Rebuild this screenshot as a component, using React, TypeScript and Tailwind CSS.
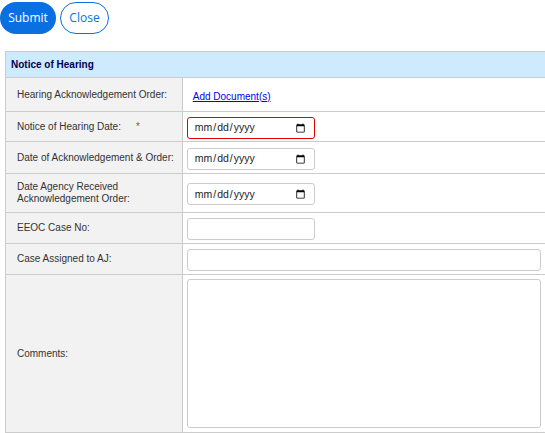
import React from "react";

const labelCls =
  "w-[177px] whitespace-nowrap border border-[#cccccc] bg-[#f2f2f2] pl-[11px] pr-2 align-middle text-[10px] leading-[12px] text-[#333333]";
const valueCls = "border border-[#cccccc] bg-white pl-[4px] pr-[4px] align-middle";
const inputCls =
  "h-[22px] rounded-[3px] border border-[#cccccc] bg-white px-[6px] text-[10.5px] text-[#222] outline-none";

export default function App() {
  return (
    <div className="h-[433px] w-[545px] overflow-hidden bg-white font-['Liberation_Sans',Arial,sans-serif]">
      <div className="flex items-center gap-[4px] pt-[2px]">
        <button
          type="button"
          className="h-[32px] w-[56px] rounded-full bg-[#0a6fe0] font-['Open_Sans',sans-serif] text-[12px] text-white"
        >
          Submit
        </button>
        <button
          type="button"
          className="h-[32px] w-[49px] rounded-full border border-[#0a6fe0] bg-white font-['Open_Sans',sans-serif] text-[12px] text-[#0a6fe0]"
        >
          Close
        </button>
      </div>

      <table className="ml-[5px] mt-[17px] w-[540px] border-collapse border border-[#cccccc]">
        <tbody>
          <tr className="h-[26px]">
            <td
              colSpan={2}
              className="border border-[#cccccc] bg-[#cdebfd] pl-[5px] text-[10px] font-bold text-[#000055]"
            >
              Notice of Hearing
            </td>
          </tr>
          <tr className="h-[34px]">
            <td className={labelCls}>Hearing Acknowledgement Order:</td>
            <td className={valueCls + " pl-[10px]"}>
              <a href="#" className="text-[10px] text-[#0000ee] underline">
                Add Document(s)
              </a>
            </td>
          </tr>
          <tr className="h-[30px]">
            <td className={labelCls}>
              <span className="inline-block w-[119px]">Notice of Hearing Date:</span>
              <span className="text-[#e03030]">*</span>
            </td>
            <td className={valueCls}>
              <input type="date" className={inputCls + " w-[128px] border-[#e00000]"} />
            </td>
          </tr>
          <tr className="h-[32px]">
            <td className={labelCls}>Date of Acknowledgement &amp; Order:</td>
            <td className={valueCls}>
              <input type="date" className={inputCls + " w-[128px]"} />
            </td>
          </tr>
          <tr className="h-[39px]">
            <td className={labelCls}>
              Date Agency Received
              <br />
              Acknowledgement Order:
            </td>
            <td className={valueCls}>
              <input type="date" className={inputCls + " w-[128px]"} />
            </td>
          </tr>
          <tr className="h-[31px]">
            <td className={labelCls}>EEOC Case No:</td>
            <td className={valueCls}>
              <input type="text" className={inputCls + " w-[128px]"} />
            </td>
          </tr>
          <tr className="h-[31px]">
            <td className={labelCls}>Case Assigned to AJ:</td>
            <td className={valueCls}>
              <input type="text" className={inputCls + " w-[354px]"} />
            </td>
          </tr>
          <tr className="h-[158px]">
            <td className={labelCls}>Comments:</td>
            <td className={valueCls}>
              <textarea className="block h-[149px] w-[354px] resize-none rounded-[3px] border border-[#cccccc] bg-white outline-none" />
            </td>
          </tr>
        </tbody>
      </table>
    </div>
  );
}
